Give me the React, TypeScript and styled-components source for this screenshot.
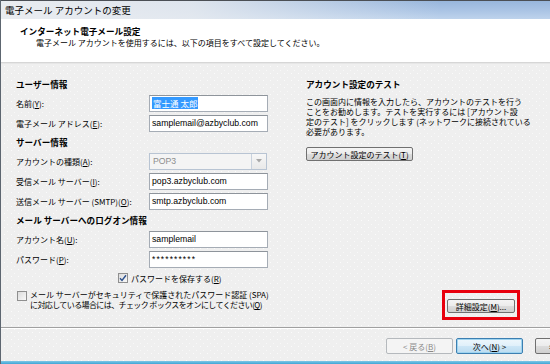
import React from 'react'
import styled, { createGlobalStyle } from 'styled-components'

const GlobalStyle = createGlobalStyle`
    html, body {
        margin: 0px;
        padding: 0px;
        overflow: hidden;
        background: #efefef;
    }
    body {
        font-family: "Liberation Sans", "Noto Sans CJK JP", sans-serif;
        font-size: 8px;
        color: #000000;
    }
`

const jp = `"Noto Sans CJK JP", "Liberation Sans", sans-serif`

const Window = styled.div`
    width: 550px;
    height: 364px;
    overflow: hidden;
    display: flex;
    flex-direction: column;
    border-left: 1px solid #5d6670;
    box-sizing: border-box;
    background-color: #efefef;
    background-image: radial-gradient(circle, #fbfbfb 0.7px, transparent 0.9px),
        radial-gradient(circle, #f8f8f8 0.7px, transparent 0.9px);
    background-size: 7px 7px, 7px 7px;
    background-position: 0px 0px, 3px 4px;
`

const TitleBar = styled.div`
    height: 18px;
    flex-shrink: 0;
    border-top: 1px solid #4b4f55;
    display: flex;
    align-items: center;
    padding-left: 4px;
    font-family: ${jp};
    font-size: 9.5px;
    color: #000000;
    background: linear-gradient(to right, #e9ecf0 0%, rgba(233, 236, 240, 0.85) 35%, rgba(233, 236, 240, 0) 80%),
        linear-gradient(to bottom, #98b6dc 0%, #a9c3e4 50%, #bed3ec 100%);
`

const Header = styled.div`
    height: 44px;
    flex-shrink: 0;
    box-sizing: border-box;
    background: #ffffff;
    border-bottom: 1px solid #d6d6d6;
    padding-top: 6px;
    font-family: ${jp};
`

const HeaderTitle = styled.div`
    padding-left: 19px;
    font-weight: bold;
    font-size: 8.6px;
    line-height: 12px;
`

const HeaderSub = styled.div`
    padding-left: 35px;
    font-size: 8px;
    line-height: 12px;
`

const Body = styled.div`
    flex: 1;
    display: flex;
    padding-top: 11px;
    box-sizing: border-box;
    font-family: ${jp};
    border-top: 1px solid #e6e6e6;
`

const LeftCol = styled.div`
    width: 289px;
    flex-shrink: 0;
    box-sizing: border-box;
    padding-left: 15px;
    display: flex;
    flex-direction: column;
`

const SectionTitle = styled.div`
    height: 18px;
    line-height: 18px;
    font-weight: bold;
    font-size: 8.6px;
    white-space: nowrap;
`

const FieldRow = styled.div`
    height: 20px;
    display: grid;
    grid-template-columns: 133px 119px;
    align-items: center;
`

const FieldLabel = styled.div`
    font-size: 8px;
    white-space: nowrap;
`

const TextBox = styled.div`
    height: 17px;
    box-sizing: border-box;
    border: 1px solid #a5acb5;
    border-top-color: #8e949b;
    background: #ffffff;
    display: flex;
    align-items: center;
    padding-left: 2px;
    font-family: "Liberation Sans", "Noto Sans CJK JP", sans-serif;
    font-size: 8.7px;
    color: #000000;
    white-space: nowrap;
    overflow: hidden;
`

const Masked = styled.span`
    letter-spacing: 1.1px;
    font-size: 8.5px;
`

const Selected = styled.span`
    background: #3399ff;
    color: #ffffff;
    font-family: ${jp};
    font-size: 8.5px;
    padding: 0px 1px;
    line-height: 12px;
`

const SelectBox = styled.div`
    width: 118px;
    height: 17px;
    box-sizing: border-box;
    border: 1px solid #b8c4d3;
    background: #f4f4f4;
    display: flex;
    align-items: stretch;
    font-family: "Liberation Sans", sans-serif;
    font-size: 8.7px;
    color: #8d8d8d;
`

const SelectValue = styled.div`
    flex: 1;
    display: flex;
    align-items: center;
    padding-left: 3px;
`

const SelectArrow = styled.div`
    width: 14px;
    border-left: 1px solid #c9d2dd;
    background: linear-gradient(to bottom, #f7f7f7, #e9e9e9);
    display: flex;
    align-items: center;
    justify-content: center;
`

const CheckRow = styled.div<{ $indent: number }>`
    height: 18px;
    display: flex;
    align-items: center;
    gap: 3px;
    padding-left: ${props => props.$indent}px;
    font-size: 8px;
`

const SpaRow = styled.div`
    display: flex;
    align-items: flex-start;
    gap: 3px;
    padding-left: 1px;
    margin-top: 3px;
    font-size: 8px;
    line-height: 10px;
`

const SpaLine = styled.div<{ $tight?: boolean }>`
    white-space: nowrap;
    letter-spacing: ${props => (props.$tight ? '-0.6px' : '0px')};
`

const CheckBox = styled.div<{ $checked?: boolean }>`
    width: 10px;
    height: 10px;
    flex-shrink: 0;
    box-sizing: border-box;
    border: 1px solid #8f8f8f;
    background: linear-gradient(135deg, #dcdcdc, #f8f8f8);
    display: flex;
    align-items: center;
    justify-content: center;
    margin-top: ${props => (props.$checked ? '0px' : '1px')};
`

const RightCol = styled.div`
    width: 214px;
    flex-shrink: 0;
    margin-left: 16px;
    display: flex;
    flex-direction: column;
`

const Para = styled.div`
    margin-top: 4px;
    font-size: 8px;
    line-height: 10px;
    white-space: nowrap;
`

const PushButton = styled.div<{ $width: number }>`
    width: ${props => props.$width}px;
    height: 14px;
    box-sizing: border-box;
    border: 1px solid #707070;
    border-radius: 2px;
    background: linear-gradient(to bottom, #f4f4f4 0%, #ececec 48%, #dcdcdc 52%, #d0d0d0 100%);
    display: flex;
    align-items: center;
    justify-content: center;
    font-size: 8px;
    white-space: nowrap;
`

const TestButtonWrap = styled.div`
    margin-top: 10px;
`

const RedFrame = styled.div`
    margin-top: auto;
    margin-bottom: 7px;
    align-self: flex-end;
    border: 3px solid #e8000d;
    padding: 6px 2px 4px 2px;
`

const Footer = styled.div`
    height: 34px;
    flex-shrink: 0;
    box-sizing: border-box;
    border-top: 1px solid #a0a0a0;
    box-shadow: inset 0px 1px 0px #ffffff;
    display: flex;
    gap: 3px;
    padding-top: 10px;
    padding-left: 385px;
    overflow: hidden;
    font-family: ${jp};
`

const NavButton = styled.div<{ $variant: 'disabled' | 'default' | 'normal' }>`
    width: 67px;
    height: 16px;
    flex-shrink: 0;
    box-sizing: border-box;
    border-radius: 2px;
    display: flex;
    align-items: center;
    justify-content: center;
    font-size: 8px;
    margin-left: ${props => (props.$variant === 'normal' ? '9px' : '0px')};
    border: 1px solid
        ${props =>
            props.$variant === 'disabled' ? '#b5b9bd' : props.$variant === 'default' ? '#3c7fb1' : '#707070'};
    color: ${props => (props.$variant === 'disabled' ? '#8a8a8a' : '#000000')};
    background: ${props =>
        props.$variant === 'disabled'
            ? '#f4f4f4'
            : props.$variant === 'default'
              ? 'linear-gradient(to bottom, #eef7fc 0%, #e0f0fa 48%, #cce6f6 52%, #bcdcf0 100%)'
              : 'linear-gradient(to bottom, #f4f4f4 0%, #ececec 48%, #dcdcdc 52%, #d0d0d0 100%)'};
    box-shadow: ${props => (props.$variant === 'default' ? 'inset 0px 0px 0px 1px #9fd4f0' : 'none')};
`

const BottomEdge = styled.div`
    height: 3px;
    flex-shrink: 0;
    background: linear-gradient(to bottom, #7fc7e6, #3ea6d6);
`

const Check = () => (
    <svg width="8" height="8" viewBox="0 0 8 8">
        <path d="M1 4.2 L3 6.4 L7 1.2" fill="none" stroke="#2b4f8c" strokeWidth="1.4" />
    </svg>
)

const Arrow = () => (
    <svg width="6" height="4" viewBox="0 0 6 4">
        <path d="M0 0 L6 0 L3 3.5 Z" fill="#a8a8a8" />
    </svg>
)

const fields = {
    name: '富士通 太郎',
    email: 'samplemail@azbyclub.com',
    incoming: 'pop3.azbyclub.com',
    outgoing: 'smtp.azbyclub.com',
    account: 'samplemail',
}

const App = () => {
    return (
        <>
            <GlobalStyle />
            <Window>
                <TitleBar>電子メール アカウントの変更</TitleBar>
                <Header>
                    <HeaderTitle>インターネット電子メール設定</HeaderTitle>
                    <HeaderSub>電子メール アカウントを使用するには、以下の項目をすべて設定してください。</HeaderSub>
                </Header>
                <Body>
                    <LeftCol>
                        <SectionTitle>ユーザー情報</SectionTitle>
                        <FieldRow>
                            <FieldLabel>
                                名前(<u>Y</u>):
                            </FieldLabel>
                            <TextBox>
                                <Selected>{fields.name}</Selected>
                            </TextBox>
                        </FieldRow>
                        <FieldRow>
                            <FieldLabel>
                                電子メール アドレス(<u>E</u>):
                            </FieldLabel>
                            <TextBox>{fields.email}</TextBox>
                        </FieldRow>
                        <SectionTitle>サーバー情報</SectionTitle>
                        <FieldRow>
                            <FieldLabel>
                                アカウントの種類(<u>A</u>):
                            </FieldLabel>
                            <SelectBox>
                                <SelectValue>POP3</SelectValue>
                                <SelectArrow>
                                    <Arrow />
                                </SelectArrow>
                            </SelectBox>
                        </FieldRow>
                        <FieldRow>
                            <FieldLabel>
                                受信メール サーバー(<u>I</u>):
                            </FieldLabel>
                            <TextBox>{fields.incoming}</TextBox>
                        </FieldRow>
                        <FieldRow>
                            <FieldLabel>
                                送信メール サーバー (SMTP)(<u>O</u>):
                            </FieldLabel>
                            <TextBox>{fields.outgoing}</TextBox>
                        </FieldRow>
                        <SectionTitle>メール サーバーへのログオン情報</SectionTitle>
                        <FieldRow>
                            <FieldLabel>
                                アカウント名(<u>U</u>):
                            </FieldLabel>
                            <TextBox>{fields.account}</TextBox>
                        </FieldRow>
                        <FieldRow>
                            <FieldLabel>
                                パスワード(<u>P</u>):
                            </FieldLabel>
                            <TextBox>
                                <Masked>**********</Masked>
                            </TextBox>
                        </FieldRow>
                        <CheckRow $indent={102}>
                            <CheckBox $checked>
                                <Check />
                            </CheckBox>
                            <span>
                                パスワードを保存する(<u>R</u>)
                            </span>
                        </CheckRow>
                        <SpaRow>
                            <CheckBox />
                            <div>
                                <SpaLine>メール サーバーがセキュリティで保護されたパスワード認証 (SPA)</SpaLine>
                                <SpaLine $tight>
                                    に対応している場合には、チェック ボックスをオンにしてください(<u>Q</u>)
                                </SpaLine>
                            </div>
                        </SpaRow>
                    </LeftCol>
                    <RightCol>
                        <SectionTitle>アカウント設定のテスト</SectionTitle>
                        <Para>
                            この画面内に情報を入力したら、アカウントのテストを行う
                            <br />
                            ことをお勧めします。テストを実行するには [アカウント設
                            <br />
                            定のテスト] をクリックします (ネットワークに接続されている
                            <br />
                            必要があります。
                        </Para>
                        <TestButtonWrap>
                            <PushButton $width={107}>
                                アカウント設定のテスト(<u>T</u>)
                            </PushButton>
                        </TestButtonWrap>
                        <RedFrame>
                            <PushButton $width={68}>
                                詳細設定(<u>M</u>)...
                            </PushButton>
                        </RedFrame>
                    </RightCol>
                </Body>
                <Footer>
                    <NavButton $variant="disabled">
                        &lt; 戻る(<u>B</u>)
                    </NavButton>
                    <NavButton $variant="default">
                        次へ(<u>N</u>) &gt;
                    </NavButton>
                    <NavButton $variant="normal">キャンセル</NavButton>
                </Footer>
                <BottomEdge />
            </Window>
        </>
    )
}

export default App
